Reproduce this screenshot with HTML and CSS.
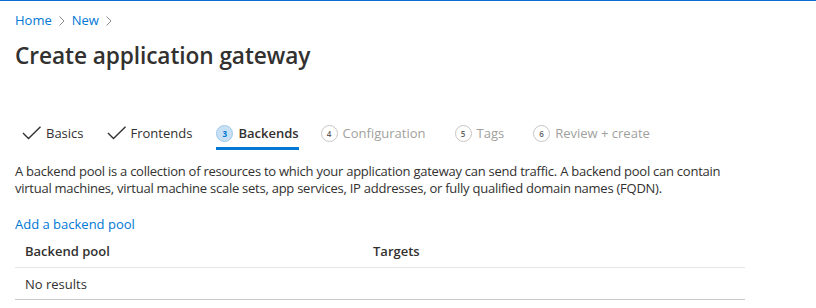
FILE: index.html
```html
<!DOCTYPE html>
<html>
<head>
<meta charset="utf-8">
<link rel="stylesheet" href="styles.css">
</head>
<body>
<div class="topbar"></div>
<div class="page">
  <nav class="crumbs">
    <a class="crumb">Home</a>
    <svg class="chev" width="8" height="12" viewBox="0 0 8 12"><path d="M1.5 1.5 L6 6 L1.5 10.5" fill="none" stroke="#8a8a8a" stroke-width="1"/></svg>
    <a class="crumb">New</a>
    <svg class="chev" width="8" height="12" viewBox="0 0 8 12"><path d="M1.5 1.5 L6 6 L1.5 10.5" fill="none" stroke="#8a8a8a" stroke-width="1"/></svg>
  </nav>
  <h1 class="title">Create application gateway</h1>

  <div class="tabs">
    <div class="tab done">
      <svg class="check" width="20" height="14" viewBox="0 0 20 14"><path d="M1 7 L6.5 12.5 L18.5 0.8" fill="none" stroke="#323130" stroke-width="1.4"/></svg>
      <span>Basics</span>
    </div>
    <div class="tab done">
      <svg class="check" width="20" height="14" viewBox="0 0 20 14"><path d="M1 7 L6.5 12.5 L18.5 0.8" fill="none" stroke="#323130" stroke-width="1.4"/></svg>
      <span>Frontends</span>
    </div>
    <div class="tab active">
      <span class="num cur">3</span>
      <span>Backends</span>
    </div>
    <div class="tab todo">
      <span class="num">4</span>
      <span>Configuration</span>
    </div>
    <div class="tab todo">
      <span class="num">5</span>
      <span>Tags</span>
    </div>
    <div class="tab todo">
      <span class="num">6</span>
      <span>Review + create</span>
    </div>
  </div>

  <p class="desc">A backend pool is a collection of resources to which your application gateway can send traffic. A backend pool can contain virtual machines, virtual machine scale sets, app services, IP addresses, or fully qualified domain names (FQDN).</p>

  <a class="addlink">Add a backend pool</a>

  <div class="grid">
    <div class="row head">
      <div class="cell c1">Backend pool</div>
      <div class="cell c2">Targets</div>
    </div>
    <div class="row body">
      <div class="cell c1">No results</div>
    </div>
  </div>
</div>
</body>
</html>
```
FILE: styles.css
```css
* { box-sizing: border-box; }
html, body { margin: 0; padding: 0; background: #fff; }
body {
  font-family: "Open Sans", "Noto Sans", sans-serif;
  color: #323130;
  font-size: 13px;
  overflow: hidden;
}
.topbar { height: 1px; background: #0a6ed1; }
.page { padding: 0 0 0 15px; }
.crumbs {
  display: flex;
  align-items: center;
  gap: 6px;
  height: 18px;
  margin-top: 10px;
  font-size: 13px;
}
.crumb { color: #0078d4; }
.chev { margin-top: 1px; }
.title {
  margin: 11px 0 0 0;
  font-size: 22.7px;
  font-weight: 600;
  line-height: 32px;
  color: #323130;
  letter-spacing: -0.1px;
}
.tabs {
  display: flex;
  margin-top: 48px;
  margin-left: 7px;
  height: 30px;
}
.tab {
  display: flex;
  align-items: center;
  height: 26px;
  font-size: 13px;
  margin-right: 23px;
}
.tab .check { margin-right: 4px; }
.tab.done { color: #323130; }
.tab.active {
  font-weight: 600;
  border-bottom: 3px solid #0078d4;
  height: 30px;
  padding-bottom: 1px;
  margin-left: 1px;
  margin-right: 22px;
}
.tab.todo { color: #a19f9d; margin-right: 29px; }
.num {
  display: inline-flex;
  align-items: center;
  justify-content: center;
  width: 17px;
  height: 17px;
  border-radius: 50%;
  border: 1px solid #c8c6c4;
  font-size: 8px;
  font-weight: 600;
  color: #605e5c;
  margin-right: 5px;
}
.num.cur {
  background: #c7e0f4;
  border-color: #9fc8ea;
  color: #0078d4;
  font-weight: 700;
}
.desc {
  margin: 13px 0 0 0;
  font-size: 13px;
  line-height: 17px;
  width: 718px;
  letter-spacing: -0.25px;
}
.addlink {
  display: block;
  margin-top: 18px;
  color: #0078d4;
  font-size: 13px;
  line-height: 18px;
}
.grid { width: 730px; margin-top: 0; }
.row { display: flex; align-items: center; }
.row.head {
  height: 35px;
  border-bottom: 1px solid #e6e6e6;
  font-weight: 600;
  padding-top: 2px;
}
.row.body {
  height: 32px;
  border-bottom: 1px solid #c8c8c8;
}
.cell { padding-left: 10px; }
.c1 { width: 348px; }
.c2 { }
```
